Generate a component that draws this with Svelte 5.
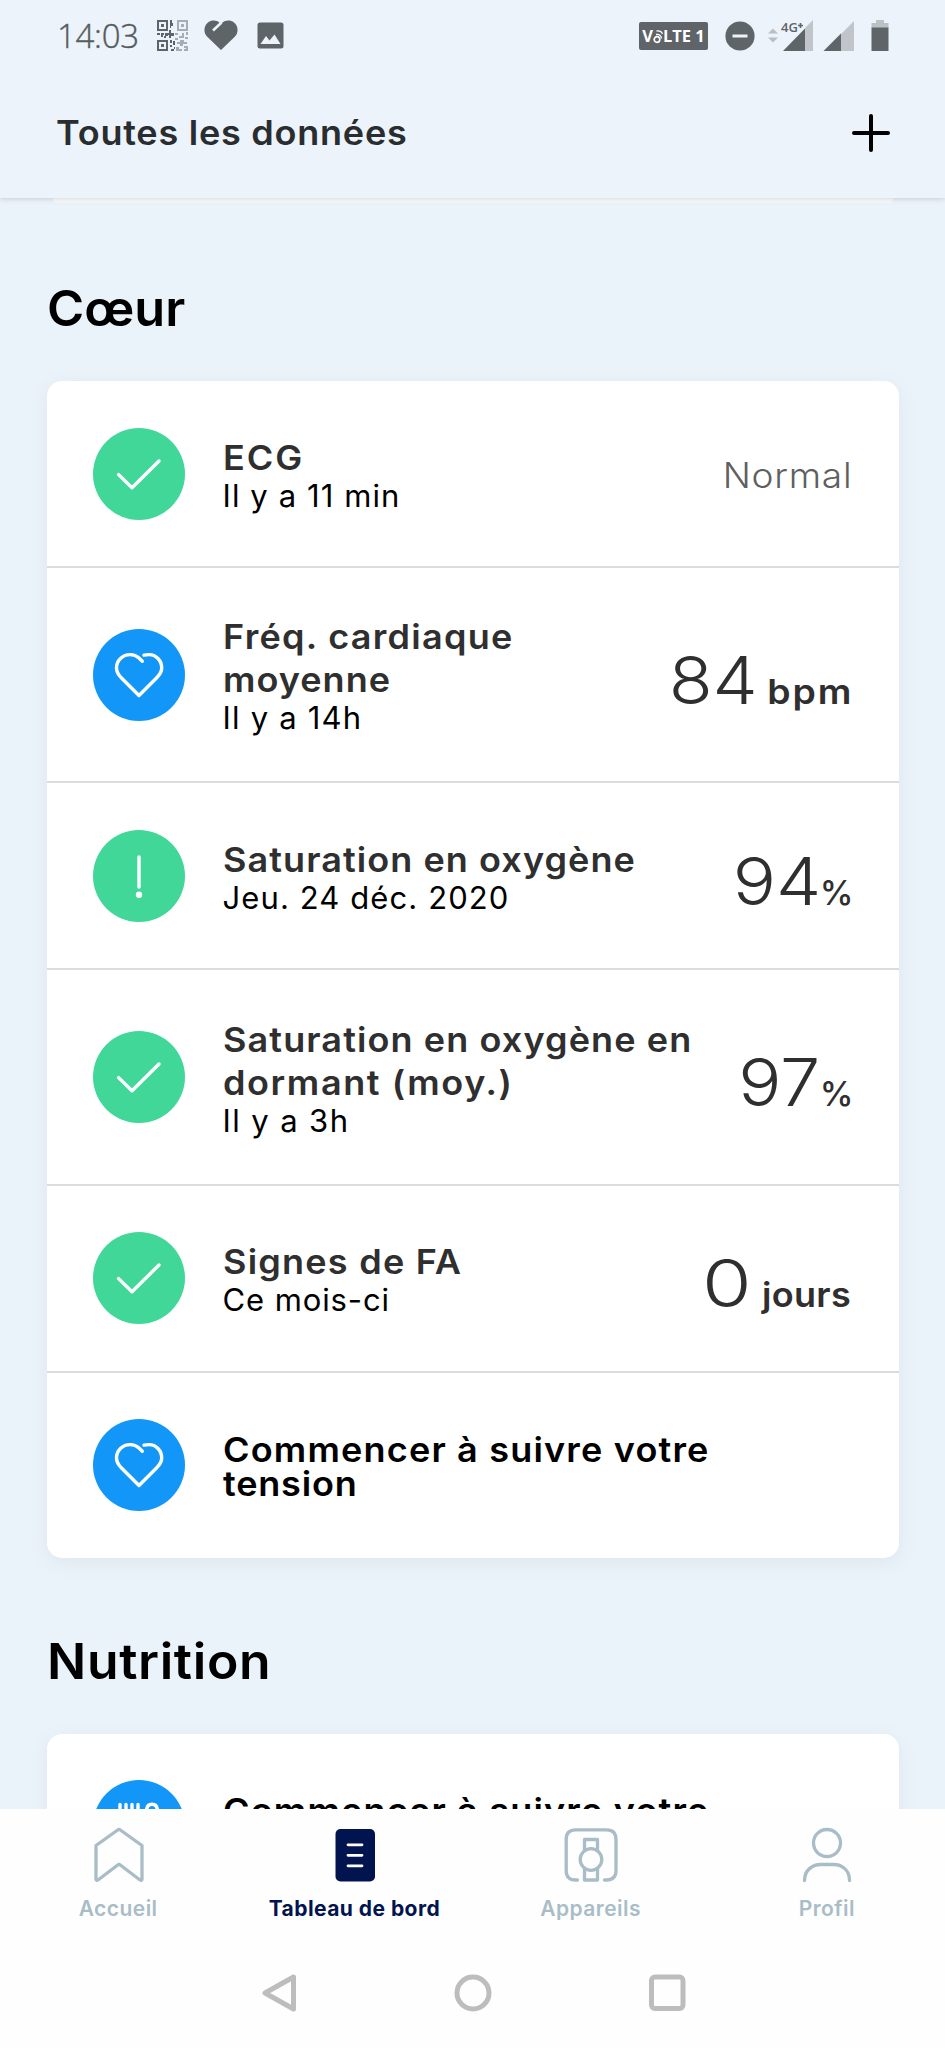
<script>
  const heart = [
    { icon: 'check', tone: 'green', title: [['ECG', 1.85]], sub: ['Il y a 11 min', 1.1], status: 'Normal' },
    { icon: 'heart', tone: 'blue', title: [['Fréq. cardiaque', 1.2], ['moyenne', 0.95]], sub: ['Il y a 14h', 1.2], value: '84', unit: 'bpm' },
    { icon: 'alert', tone: 'green', title: [['Saturation en oxygène', 1]], sub: ['Jeu. 24 déc. 2020', 1.1], value: '94', unit: '%' },
    { icon: 'check', tone: 'green', title: [['Saturation en oxygène en', 1.03], ['dormant (moy.)', 1.5]], sub: ['Il y a 3h', 1.4], value: '97', unit: '%' },
    { icon: 'check', tone: 'green', title: [['Signes de FA', 1.15]], sub: ['Ce mois-ci', 0.9], value: '0', unit: 'jours' },
    { icon: 'heart', tone: 'blue', title: [['Commencer à suivre votre', 1.1], ['tension', 0.75]], cta: true }
  ];
  const nutrition = [
    { icon: 'food', tone: 'blue', title: [['Commencer à suivre votre', 1.1]], cta: true }
  ];
  const tabs = [
    { id: 'home', label: 'Accueil' },
    { id: 'board', label: 'Tableau de bord', active: true },
    { id: 'devices', label: 'Appareils' },
    { id: 'profile', label: 'Profil' }
  ];
</script>

{#snippet glyph(name)}
  <svg class="glyph" viewBox="0 0 92 92" fill="none" stroke="#fff" stroke-width="3.4" stroke-linecap="round" stroke-linejoin="round">
    {#if name === 'check'}
      <path d="M25.6 46.6L39 59.7L66 33" />
    {:else if name === 'heart'}
      <path d="M49.3 32.3L46 29C43.6 26.8 40.6 25.6 37.3 25.6C29.5 25.6 23.5 31.5 23.5 39C23.5 43.3 25.5 46 28.5 49L46 66.5L63.5 49C66.5 46 68.7 43.3 68.7 39C68.7 31.5 63 25.6 56 25.6C54.2 25.6 52.6 25.8 51 26.2" />
    {:else if name === 'alert'}
      <path d="M46 27V57" />
      <circle cx="46" cy="64.7" r="3.2" fill="#fff" stroke="none" />
    {:else}
      <path d="M27 24.5V38M33 24.5V34M39 24.5V34M45 24.5V38M27 38C27 44 45 44 45 38M36 42.5V67M59 68V43C54 40 53.500 36 53.500 31.500C53.500 27 55.500 24.300 59 24.300C62.500 24.300 64.500 27 64.500 31.500C64.500 36 64 40 59 43" />
    {/if}
  </svg>
{/snippet}

{#snippet rows(items)}
  <div class="card">
    {#each items as r}
      <div class="row">
        <div class="badge {r.tone}">{@render glyph(r.icon)}</div>
        <div class="text" class:cta={r.cta}>
          <div class="title">
            {#each r.title as [line, track]}<span style="letter-spacing: {track}px">{line}</span>{/each}
          </div>
          {#if r.sub}<div class="sub" style="letter-spacing: {r.sub[1]}px">{r.sub[0]}</div>{/if}
        </div>
        {#if r.status}<div class="status">{r.status}</div>{/if}
        {#if r.value}
          <div class="value">
            <span class="num" class:single={r.value.length === 1}>{r.value}</span><span class="unit" class:percent={r.unit === '%'} class:bpm={r.unit === 'bpm'}>{r.unit}</span>
          </div>
        {/if}
      </div>
    {/each}
  </div>
{/snippet}

<div class="screen">
  <header>
    <div class="statusbar">
      <span class="clock">14:03</span>
      <svg class="qr" width="33" height="33" viewBox="0 0 33 33" fill="#5e6468">
        <path fill-rule="evenodd" d="M1 1H12V12H1ZM3 3V10H10V3ZM5 5H8V8H5ZM1 21H12V32H1ZM3 23V30H10V23ZM5 25H8V28H5Z" />
        <path d="M14 1H16V4H17V7H15V9H14ZM1 14H4V16H1ZM5 14H8V16H7V18H5ZM9 14H12V17H10V19H8V17H9ZM13 11H15V14H18V17H15V19H13V16H12V14H13ZM14 21H16V24H14ZM17 22H19V26H17ZM14 26H16V28H14ZM15 30H18V32H15ZM18 28H19V30H18Z" />
        <g opacity=".48">
          <path fill-rule="evenodd" d="M21 1H32V12H21ZM23 3V10H30V3ZM25 5H28V8H25Z" />
          <path d="M19 14H22V16H19ZM23 17H26V14H28V19H23ZM30 13H32V16H30ZM29 18H32V20H29ZM19 19H22V21H19ZM21 23H24V21H28V23H31V25H27V27H24V25H21ZM20 28H23V30H26V32H20ZM28 27H32V32H28V30H30V29H28Z" />
        </g>
      </svg>
      <svg class="love" width="34" height="31" viewBox="0 0 34 31">
        <path d="M17 30L3 16.5C-1 12 0 5.500 4 2.500C8 -.5 13.500 0 17 4C20.500 0 26 -.5 30 2.500C34 5.500 35 12 31 16.500Z" fill="#5e6468" />
        <path d="M9 10.500L17.500 2.500" stroke="#ecf3fa" stroke-width="2.600" />
      </svg>
      <svg class="pic" width="27" height="27" viewBox="0 0 27 27">
        <rect x=".5" y=".5" width="26" height="26" rx="2.500" fill="#5e6468" />
        <path d="M3.500 22L9 14L12.500 18.500L17.500 12.500L23.500 22Z" fill="#ecf3fa" />
      </svg>
      <span class="grow"></span>
      <span class="volte">V<svg width="10" height="16" viewBox="0 0 10 16" fill="none" stroke="#fff" stroke-width="1.700"><circle cx="4" cy="11.500" r="2.800" /><path d="M3 6.500C6 6 8 8 8.500 10.500M3.500 3C7 2.500 9 4.500 9.500 6" stroke-width="1.300" /></svg>LTE 1</span>
      <svg class="dnd" width="30" height="30" viewBox="0 0 30 30"><circle cx="15" cy="15" r="14.600" fill="#5e6468" /><path d="M7.500 15H22.500" stroke="#ecf3fa" stroke-width="3" /></svg>
      <svg class="net" width="90" height="34" viewBox="0 0 90 34">
        <path d="M0 14.500L5 9.500L10 14.500ZM0 18.500L5 23.500L10 18.500Z" fill="#b9bec2" />
        <path d="M45 1V32H37V9ZM86 2V32H73V15Z" fill="#c1c5ca" />
        <path d="M15 32L37 9.500V32ZM55.500 32L73 14.500V32Z" fill="#5e6468" />
        <text x="13" y="12.500">4G</text>
        <path d="M32.500 4V9M30 6.500H35" stroke="#5e6468" stroke-width="1.600" />
      </svg>
      <svg class="bat" width="18" height="32" viewBox="0 0 18 32"><path d="M5 0H13V3H17.500V8H.5V3H5Z" fill="#bcc1c5" /><path d="M.5 7.500H17.500V31H.5Z" fill="#5e6468" /></svg>
    </div>
    <div class="titlebar">
      <h1>Toutes les données</h1>
      <svg width="40" height="40" viewBox="0 0 40 40" stroke="#000" stroke-width="4" stroke-linecap="round"><path d="M20 3V37M3 20H37" /></svg>
    </div>
  </header>

  <main>
    <div class="peek"></div>
    <section>
      <h2>Cœur</h2>
      {@render rows(heart)}
    </section>
    <section>
      <h2 class="wide">Nutrition</h2>
      {@render rows(nutrition)}
    </section>
  </main>

  <nav>
    {#each tabs as t}
      <div class="tab" class:active={t.active}>
        <svg width="56" height="56" viewBox="0 0 56 56" fill="none" stroke="#a9bdc7" stroke-width="3.3" stroke-linejoin="round" stroke-linecap="round">
          {#if t.id === 'home'}
            <path d="M26.700 3Q28 2 29.300 3L51 18.500V52.500Q50.500 54 49 53L29.300 38Q28 37 26.700 38L7 53Q5.500 54 5 52.500V18.500Z" />
          {:else if t.id === 'board'}
            <rect x="8.500" y="2" width="39.500" height="52.500" rx="5" fill="#02144f" stroke="none" />
            <path d="M21 17.800H35M21 28.300H35M21 38.800H35" stroke="#fff" stroke-width="2.800" />
          {:else if t.id === 'devices'}
            <path d="M14.500 53H12.500Q3.200 53 3.200 43.500V12.500Q3.200 2.800 12.500 2.800H43.500Q53 2.800 53 12.500V43.500Q53 53 43.500 53H41.500" />
            <circle cx="28" cy="32.500" r="10.800" />
            <path d="M21.500 23.500V12.500H34.500V23.500M21.500 42V53H34.500V42" />
          {:else}
            <circle cx="28" cy="16" r="13.500" />
            <path d="M5.500 53.500C5.500 42.500 14 37.500 22 37.500H34.500C42.500 37.500 50.500 42.500 50.500 53.500" />
          {/if}
        </svg>
        <span>{t.label}</span>
      </div>
    {/each}
  </nav>
  <div class="system">
    <svg width="40" height="40" viewBox="0 0 40 40"><path d="M6 20L34.500 4V36Z" /></svg>
    <svg width="40" height="40" viewBox="0 0 40 40"><circle cx="20" cy="20" r="16" /></svg>
    <svg width="40" height="40" viewBox="0 0 40 40"><rect x="4.500" y="4" width="31.500" height="31.500" rx="3.500" /></svg>
  </div>
</div>

<style>
  :global(body) { background: #ebf3fb; }
  .screen {
    width: 945px;
    height: 2048px;
    display: flex;
    flex-direction: column;
    overflow: hidden;
    background: #ebf3fa;
    font-family: Inter, 'Liberation Sans', sans-serif;
    color: #000;
  }
  header {
    flex: none;
    height: 198px;
    background: #ecf3fa;
    box-shadow: 0 1px 5px rgba(90, 110, 130, 0.28);
  }
  .statusbar {
    display: flex;
    align-items: center;
    height: 70px;
    box-sizing: border-box;
    padding: 1px 56px 0 59px;
  }
  .statusbar svg { flex: none; }
  .clock { font-family: 'Open Sans', sans-serif; font-weight: 300; font-size: 33px; line-height: 40px; color: #555b60; letter-spacing: -0.3px; width: 99px; margin-left: -2px; -webkit-text-stroke: 0.4px #555b60; }
  .love { margin-left: 15px; }
  .pic { margin-left: 19px; }
  .grow { flex: 1; }
  .volte {
    display: flex;
    align-items: center;
    justify-content: center;
    width: 69px;
    height: 28px;
    border-radius: 2px;
    background: #5e6468;
    color: #fff;
    font: 700 16.5px 'Open Sans', sans-serif;
    white-space: pre;
  }
  .dnd { margin-left: 17px; }
  .net { margin-left: 13px; }
  .net text { font: 600 13px 'Open Sans', sans-serif; fill: #5e6468; }
  .bat { margin-left: 13px; }
  .titlebar {
    display: flex;
    align-items: center;
    justify-content: space-between;
    height: 128px;
    box-sizing: border-box;
    padding: 0 54px 2px 56px;
  }
  h1 { margin: 0; font-size: 34px; font-weight: 600; letter-spacing: 0.7px; line-height: 42px; color: #2a2d30; transform: scaleX(1.06); transform-origin: left; }
  main { flex: 1; min-height: 0; overflow: hidden; padding: 0 46.5px 0 47px; }
  .peek { height: 5px; margin: 0 6px; background: linear-gradient(#dfe5e9, #f1f3f5 60%); border-radius: 0 0 4px 4px; }
  h2 { margin: 0 0 42px; padding-top: 76px; font-size: 49px; font-weight: 600; line-height: 60px; transform: scaleX(1.03); transform-origin: left; }
  h2.wide { padding-top: 74px; letter-spacing: 0.6px; transform: scaleX(1.055); }
  .card {
    background: #fff;
    border-radius: 15px;
    box-shadow: 0 5px 18px rgba(120, 130, 140, 0.1);
  }
  .row { display: flex; align-items: center; height: 185px; padding: 0 47px 0 46px; }
  .row + .row { border-top: 2px solid #dadddf; }
  .row:nth-child(2), .row:nth-child(4) { height: 213.4px; }
  .badge { flex: none; width: 92px; height: 92px; border-radius: 50%; }
  .green { background: #41d799; }
  .blue { background: #1297f8; }
  .glyph { display: block; width: 92px; height: 92px; }
  .text { flex: 1; min-width: 0; margin-left: 37.5px; white-space: nowrap; }
  .title { font-size: 34px; font-weight: 600; line-height: 43px; color: #2f2f2f; transform: scaleX(1.06); transform-origin: left; }
  .title span { display: block; }
  .sub { font-size: 31px; line-height: 33px; }
  .cta { padding-top: 3px; }
  .cta .title { min-height: 67px; line-height: 33.5px; color: #000; }
  .status { font-size: 35px; font-weight: 350; letter-spacing: 0.7px; line-height: 42px; color: #5f5f5f; margin-right: -0.7px; padding-top: 2px; transform: scaleX(1.06); transform-origin: right; }
  .value { display: flex; align-items: baseline; padding-top: 22px; color: #2f2f2f; line-height: 80px; }
  .num { font-size: 66px; font-weight: 320; transform: scaleX(1.09); transform-origin: right; }
  .num.single { transform: scaleX(1.22); }
  .unit { font-size: 34px; font-weight: 600; margin-left: 16px; letter-spacing: 0.3px; transform: scaleX(1.06); transform-origin: right; }
  .unit.bpm { margin-left: 17px; letter-spacing: 1.8px; margin-right: -1.8px; transform: scaleX(1.1); }
  .unit.percent { margin-left: -1px; font-weight: 500; letter-spacing: 0; margin-right: -2px; transform: none; }
  nav { flex: none; display: flex; height: 131px; background: #fefefe; }
  .tab { flex: 1; display: flex; flex-direction: column; align-items: center; padding-top: 18px; }
  .tab svg { margin-left: 1px; }
  .tab span { margin-top: 13px; font-size: 21px; font-weight: 600; line-height: 26px; letter-spacing: 0.45px; color: #a9bdc7; }
  .tab.active span { color: #02144f; font-weight: 700; }
  .system {
    flex: none;
    height: 108px;
    display: flex;
    justify-content: center;
    gap: 154px;
    background: #fefefe;
    fill: none;
    stroke: #bdbdbd;
    stroke-width: 5;
    stroke-linejoin: round;
  }
  .system svg { margin-top: 33px; }
</style>
